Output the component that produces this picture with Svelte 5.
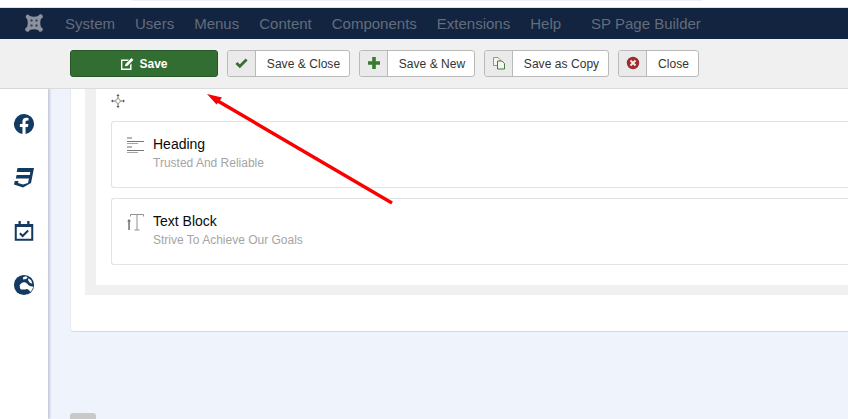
<script>
  const menus = ['System', 'Users', 'Menus', 'Content', 'Components', 'Extensions', 'Help', 'SP Page Builder'];
</script>

<div class="page">
  <div class="strip"><div class="strip-tint"></div></div>
  <nav class="navbar">
    <svg class="joomla" viewBox="0 0 18 18" width="18" height="18" aria-hidden="true">
      <path fill="#8c939e" d="M2.500 0.500a2.200 2.200 0 0 1 2.200 1.600c2.800 1 5.800 1 8.600 0a2.300 2.300 0 1 1 2.700 2.700c-1 2.800-1 5.600 0 8.400a2.300 2.300 0 1 1-2.700 2.700c-2.800-1-5.800-1-8.600 0a2.300 2.300 0 1 1-2.700-2.700c1-2.800 1-5.600 0-8.400a2.300 2.300 0 0 1 .5-4.300z" />
      <g fill="#3b4860">
        <circle cx="6.500" cy="6.500" r="1.200" /><circle cx="11.500" cy="6.500" r="1.200" />
        <circle cx="6.500" cy="11.500" r="1.200" /><circle cx="11.500" cy="11.500" r="1.200" />
      </g>
    </svg>
    <ul class="menu">
      {#each menus as m}
        <li class:sp={m === 'SP Page Builder'}>{m}</li>
      {/each}
    </ul>
  </nav>
  <div class="toolbar">
    <button class="save">
      <svg viewBox="0 0 14 14" width="14" height="14" aria-hidden="true">
        <path d="M1 2.500h8L7.600 4H2.400v7.600H10V8l1.500-1.500V13H1z" fill="#fff" />
        <path d="M5 9.300 L5.500 7 L11.500 1 L13.400 2.900 L7.400 8.900z" fill="#fff" />
      </svg>
      Save
    </button>
    <button class="tb">
      <span class="ic">
        <svg viewBox="0 0 14 14" width="13" height="13" aria-hidden="true"><path d="M1.500 7.500 L5.200 11 L12.500 3.800" fill="none" stroke="#3a6f33" stroke-width="3" /></svg>
      </span>
      <span class="lb w1">Save &amp; Close</span>
    </button>
    <button class="tb">
      <span class="ic">
        <svg viewBox="0 0 14 14" width="14" height="14" aria-hidden="true"><path d="M5.200 1h3.600v4.200H13v3.600H8.800V13H5.200V8.800H1V5.200h4.200z" fill="#3a7a32" /></svg>
      </span>
      <span class="lb w2">Save &amp; New</span>
    </button>
    <button class="tb">
      <span class="ic">
        <svg viewBox="0 0 14 14" width="14" height="14" aria-hidden="true">
          <path d="M1.500 1.500h4.500l2 2v6H1.500z" fill="#f4f4f4" stroke="#b3923a" stroke-width="1" />
          <path d="M5.500 5h4.500l2.500 2.500v5.500h-7z" fill="#f4f4f4" stroke="#3f7f3a" stroke-width="1" />
        </svg>
      </span>
      <span class="lb w3">Save as Copy</span>
    </button>
    <button class="tb">
      <span class="ic">
        <svg viewBox="0 0 14 14" width="14" height="14" aria-hidden="true">
          <circle cx="7" cy="7" r="6.200" fill="#a02b2b" />
          <path d="M4.500 4.500 L9.500 9.500 M9.500 4.500 L4.500 9.500" stroke="#f4eeee" stroke-width="2" />
        </svg>
      </span>
      <span class="lb w4">Close</span>
    </button>
  </div>

  <div class="main">
    <aside class="sidebar">
      <svg viewBox="0 0 24 24" width="22" height="22" aria-hidden="true">
        <path fill="#123a63" d="M23 12a11 11 0 1 0-12.700 10.900v-7.700H7.500V12h2.800V9.600c0-2.800 1.600-4.300 4.100-4.300 1.200 0 2.500.2 2.500.2v2.700h-1.400c-1.400 0-1.800.9-1.800 1.700V12h3.100l-.5 3.200h-2.600v7.700A11 11 0 0 0 23 12z" />
      </svg>
      <svg viewBox="-1 -1 22 22" width="22" height="22" aria-hidden="true">
        <path fill="#123a63" d="M3.500 0H20L17 15 9 19.500 0 16.500.8 13H4.500L4 15 9 16.500 14 15 15 10.500H1.800L2.600 7H15.800L16.300 4H2.700z" />
      </svg>
      <svg viewBox="0 0 24 24" width="22" height="22" aria-hidden="true">
        <path fill="none" stroke="#123a63" stroke-width="2.200" d="M3 5.500h18v16H3z" />
        <path fill="#123a63" d="M3 4.500h18v3H3zM6 1h2.500v4H6zM15.500 1H18v4h-2.500z" />
        <path fill="none" stroke="#123a63" stroke-width="2.200" d="M7.500 14.500l3 3 6-6" />
      </svg>
      <svg viewBox="0 0 24 24" width="22" height="22" aria-hidden="true">
        <circle cx="12" cy="12" r="11" fill="#123a63" />
        <path fill="#fff" d="M7 13c1-3 4.500-5 7-3.500 2 1 2 2.500 4.500 3.500l3.500 1c-.5 2.500-1.500 4-3 5.500-1.500-2-3-3.500-5-3-1.500.4-5 1.200-6-.5-.5-1-.8-2-.5-3zM11 3.500l3-1 2 1-1.500 2-3.500.5zM17 4.500l3 2.500 1 3.500-2.700-1-2-3z" />
      </svg>
    </aside>

    <div class="content">
      <section class="card">
        <div class="gray">
          <div class="inner">
            <svg class="move" viewBox="0 0 14 14" width="14" height="14" aria-hidden="true">
              <circle cx="7" cy="7" r="2.300" fill="none" stroke="#a89a70" stroke-width="1" />
              <path d="M7 .8v3.600M7 9.600v3.600M.8 7h3.600M9.600 7h3.600" stroke="#5d6a78" stroke-width="1" />
              <path d="M7 0l1.600 2H5.400zM7 14l1.600-2H5.400zM0 7l2-1.600v3.200zM14 7l-2-1.600v3.200z" fill="#4d5a68" />
            </svg>
            <div class="addon">
              <svg class="addon-ic" viewBox="0 0 17 17" width="17" height="17" aria-hidden="true">
                <g fill="#b5b5b5">
                  <rect x="0" y="0" width="5" height="2" /><rect x="0" y="9" width="5" height="2" />
                </g>
                <g fill="#777">
                  <rect x="0" y="4" width="17" height="1" /><rect x="0" y="13" width="17" height="1" />
                </g>
                <g fill="#a5a5a5">
                  <rect x="0" y="6" width="11" height="1" /><rect x="0" y="15" width="11" height="1" />
                </g>
              </svg>
              <div>
                <div class="title">Heading</div>
                <div class="sub">Trusted And Reliable</div>
              </div>
            </div>
            <div class="addon">
              <svg class="addon-ic" viewBox="0 0 17 17" width="17" height="17" aria-hidden="true">
                <path d="M3.500.5h13M10 .5v15.500M3.500.5v2M16.500.5v2M7.500 16h5" fill="none" stroke="#929292" stroke-width="1" />
                <path d="M1.500 5l2 2.500H2.300V16H.8V7.500H-.4z" fill="#6f6f6f" transform="translate(.5 0)" />
              </svg>
              <div>
                <div class="title">Text Block</div>
                <div class="sub">Strive To Achieve Our Goals</div>
              </div>
            </div>
          </div>
        </div>
      </section>
      <div class="stub"></div>
    </div>
  </div>

  <svg class="arrow" viewBox="0 0 848 419" width="848" height="419" aria-hidden="true">
    <path d="M392 203 L217 100.500" stroke="#fa0000" stroke-width="3.400" fill="none" />
    <path d="M207 94 L222 97.500 L216.500 104.500z" fill="#fa0000" />
  </svg>
</div>

<style>
  :global(body) { margin: 0; overflow: hidden; }
  .page {
    position: relative;
    width: 848px;
    height: 419px;
    overflow: hidden;
    display: flex;
    flex-direction: column;
    background: #eff3fb;
    font-family: "Liberation Sans", Arial, sans-serif;
  }
  .strip { height: 8px; background: #fff; border-bottom: 1px solid #e2e2e2; box-sizing: border-box; position: relative; }
  .strip-tint { margin-left: 132px; width: 570px; height: 1px; background: #eef0fa; }
  .navbar {
    height: 31px;
    flex: none;
    background: #132440;
    display: flex;
    align-items: center;
    padding-left: 25px;
    box-sizing: border-box;
  }
  .joomla { flex: none; margin-top: -1px; }
  .menu {
    list-style: none;
    margin: 0 0 0 22px;
    padding: 0;
    display: flex;
    gap: 20px;
    font-size: 15px;
    color: #626c7d;
  }
  .menu .sp { margin-left: 10px; }
  .toolbar {
    height: 50px;
    flex: none;
    background: #f0f0f0;
    border-bottom: 1px solid #dcdcdc;
    box-sizing: border-box;
    display: flex;
    align-items: flex-start;
    padding: 11px 0 0 70px;
    gap: 9px;
  }
  button {
    font-family: inherit;
    font-size: 12px;
    height: 27px;
    padding: 0;
    box-sizing: border-box;
    border-radius: 3px;
    cursor: pointer;
  }
  .save {
    width: 148px;
    background: #326e31;
    border: 1px solid #27562a;
    color: #fff;
    font-weight: bold;
    font-size: 12px;
    display: flex;
    align-items: center;
    justify-content: center;
    gap: 5px;
  }
  .tb {
    display: flex;
    align-items: stretch;
    background: #fff;
    border: 1px solid #b9b9b9;
    color: #333;
    letter-spacing: .05px;
  }
  .ic {
    width: 28px;
    flex: none;
    background: #eaeaea;
    border-right: 1px solid #b9b9b9;
    border-radius: 3px 0 0 3px;
    display: flex;
    align-items: center;
    justify-content: center;
    padding-bottom: 2px;
    box-sizing: border-box;
  }
  .lb { display: flex; align-items: center; justify-content: center; padding-left: 2px; box-sizing: border-box; }
  .w1 { width: 93px; }
  .w2 { width: 86px; }
  .w3 { width: 95px; }
  .w4 { width: 51px; }
  .main { flex: 1; display: flex; min-height: 0; }
  .sidebar {
    width: 48px;
    flex: none;
    background: #fff;
    box-shadow: 2px 0 2px #c5cbdc;
    display: flex;
    flex-direction: column;
    align-items: center;
    gap: 31.500px;
    padding-top: 24px;
    box-sizing: border-box;
  }
  .content { flex: 1; padding-left: 22px; display: flex; flex-direction: column; min-width: 0; }
  .card {
    height: 243px;
    flex: none;
    background: #fff;
    border-bottom: 1px solid #d5d8dc;
    border-left: 1px solid #e6e9ef;
    border-radius: 0 0 0 4px;
    box-sizing: border-box;
    padding-left: 14px;
  }
  .gray {
    height: 206px;
    background: #f0f0f0;
    padding: 0 0 10px 11px;
    box-sizing: border-box;
  }
  .inner {
    height: 196px;
    background: #fff;
    padding: 5px 0 0 15px;
    box-sizing: border-box;
  }
  .move { display: block; margin-bottom: 13px; }
  .addon {
    height: 67px;
    margin-bottom: 10px;
    border: 1px solid #e3e3e3;
    border-right: 0;
    border-radius: 3px 0 0 3px;
    box-sizing: border-box;
    display: flex;
    padding: 14px 0 0 15px;
    gap: 9px;
  }
  .addon-ic { flex: none; margin-top: 1px; overflow: visible; }
  .title { font-size: 14px; line-height: 16px; color: #0a0a0a; }
  .sub { font-size: 12px; line-height: 14px; margin-top: 4px; color: #a5a5a5; }
  .stub {
    width: 26px;
    height: 8px;
    margin-top: 81px;
    background: #c9c9c9;
    border-radius: 3px 3px 0 0;
  }
  .arrow { position: absolute; left: 0; top: 0; pointer-events: none; }
</style>
